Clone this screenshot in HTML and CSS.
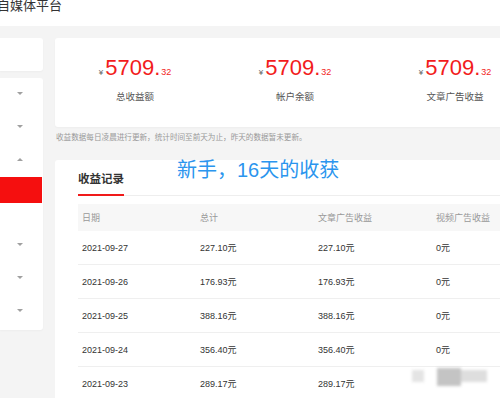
FILE: index.html
```html
<!DOCTYPE html>
<head>
  <meta charset="UTF-8">
  <meta name="viewport" content="width=device-width, initial-scale=1.0">
  <title>收益</title>
  <link rel="stylesheet" href="styles.css">
</head>
<body>
  <div class="header">
    <div class="title">自媒体平台</div>
  </div>
  <div class="layout">
    <!-- 左侧菜单 -->
    <div class="sidebar">
      <div class="side-card side-top"></div>
      <div class="side-card">
        <div class="menu-item"><span class="caret"></span></div>
        <div class="menu-item"><span class="caret"></span></div>
        <div class="menu-item"><span class="caret up"></span></div>
        <div class="sub-item active"></div>
        <div class="sub-item"></div>
        <div class="menu-item"><span class="caret"></span></div>
        <div class="menu-item"><span class="caret"></span></div>
        <div class="menu-item"><span class="caret"></span></div>
      </div>
    </div>
    <div class="main">
      <div class="stat-card">
        <div class="stat">
          <div class="num"><span class="yen">¥</span><span class="big">5709.</span><span class="small">32</span></div>
          <div class="label">总收益额</div>
        </div>
        <div class="stat">
          <div class="num"><span class="yen">¥</span><span class="big">5709.</span><span class="small">32</span></div>
          <div class="label">帐户余额</div>
        </div>
        <div class="stat">
          <div class="num"><span class="yen">¥</span><span class="big">5709.</span><span class="small">32</span></div>
          <div class="label">文章广告收益</div>
        </div>
      </div>
      <div class="note">收益数据每日凌晨进行更新，统计时间至前天为止，昨天的数据暂未更新。</div>
      <div class="table-card">
        <div class="tabs"><div class="tab">收益记录</div></div>
        <div class="table">
          <div class="row head">
            <div class="cell">日期</div><div class="cell">总计</div><div class="cell">文章广告收益</div><div class="cell">视频广告收益</div>
          </div>
          <div class="row">
            <div class="cell">2021-09-27</div><div class="cell">227.10元</div><div class="cell">227.10元</div><div class="cell">0元</div>
          </div>
          <div class="row">
            <div class="cell">2021-09-26</div><div class="cell">176.93元</div><div class="cell">176.93元</div><div class="cell">0元</div>
          </div>
          <div class="row">
            <div class="cell">2021-09-25</div><div class="cell">388.16元</div><div class="cell">388.16元</div><div class="cell">0元</div>
          </div>
          <div class="row">
            <div class="cell">2021-09-24</div><div class="cell">356.40元</div><div class="cell">356.40元</div><div class="cell">0元</div>
          </div>
          <div class="row">
            <div class="cell">2021-09-23</div><div class="cell">289.17元</div><div class="cell">289.17元</div><div class="cell"></div>
          </div>
        </div>
        <!-- 截图上的标注文字 -->
        <div class="caption">新手，16天的收获</div>
      </div>
    </div>
  </div>
  <div class="mosaic">
    <span class="m1"></span><span class="m2"></span><span class="m3"></span>
  </div>
</body>
</html>
```
FILE: styles.css
```css
body {
  margin: 0;
  width: 500px;
  height: 398px;
  overflow: hidden;
  position: relative;
  background: #f4f4f4;
  font-family: "Liberation Sans", "Noto Sans CJK SC", sans-serif;
  color: #333;
}
.header {
  height: 26px;
  background: #fff;
}
.title {
  font-size: 13px;
  line-height: 12px;
  margin-left: -3px;
  color: #333;
}
.layout {
  display: flex;
  gap: 12px;
  padding-top: 12px;
}
.sidebar {
  width: 43px;
  flex: none;
  display: flex;
  flex-direction: column;
  gap: 7px;
}
.side-card {
  background: #fff;
  border-radius: 0 3px 3px 0;
  box-shadow: 0 1px 2px rgba(0, 0, 0, 0.03);
  padding-bottom: 2px;
}
.side-top {
  height: 33px;
  padding: 0;
}
.menu-item {
  height: 33px;
  display: flex;
  align-items: center;
  padding-left: 17px;
}
.sub-item {
  height: 26px;
}
.sub-item.active {
  background: #f50f0f;
  margin-right: 1px;
}
.caret {
  width: 0;
  height: 0;
  margin-top: -2px;
  border-left: 3px solid transparent;
  border-right: 3px solid transparent;
  border-top: 3px solid #a0a0a0;
}
.caret.up {
  border-top: 0;
  border-bottom: 3px solid #a0a0a0;
}
.main {
  width: 500px;
  flex: none;
}
.stat-card {
  width: 480px;
  height: 89px;
  background: #fff;
  border-radius: 3px;
  box-shadow: 0 1px 2px rgba(0, 0, 0, 0.03);
  display: grid;
  grid-template-columns: 160px 160px 160px;
}
.stat {
  text-align: center;
  padding-top: 17px;
}
.num {
  line-height: 26px;
  color: #f21c1c;
}
.yen {
  font-size: 8px;
  color: #666;
  margin-right: 2px;
}
.big {
  font-size: 22px;
}
.small {
  font-size: 9px;
  margin-left: 1px;
}
.label {
  margin-top: 5px;
  font-size: 9.5px;
  line-height: 12px;
  color: #555;
}
.note {
  margin-top: 5px;
  font-size: 7.6px;
  line-height: 12px;
  color: #999;
  padding-left: 1px;
  white-space: nowrap;
}
.table-card {
  position: relative;
  margin-top: 16px;
  background: #fff;
  border-radius: 3px;
  padding: 12px 0 0 23px;
  height: 240px;
}
.tabs {
  display: flex;
  border-bottom: 1px solid #eeeeee;
}
.tab {
  font-size: 11.5px;
  font-weight: bold;
  line-height: 15px;
  color: #333;
  padding-bottom: 7px;
  border-bottom: 2px solid #f01a1a;
  margin-bottom: -1px;
}
.table {
  margin-top: 8px;
}
.row {
  display: grid;
  grid-template-columns: 118px 118px 118px 118px;
  height: 33px;
  align-items: center;
  border-bottom: 1px solid #efefef;
  font-size: 9px;
  color: #333;
}
.row.head {
  height: 27px;
  background: #f7f7f7;
  border-bottom: 0;
  color: #999;
}
.cell {
  padding-left: 4px;
  white-space: nowrap;
}
.caption {
  position: absolute;
  left: 122px;
  top: 0;
  font-size: 20px;
  line-height: 20px;
  color: #2b95ee;
  white-space: nowrap;
}
/* 右下角的打码水印 */
.mosaic {
  position: absolute;
  left: 410px;
  top: 366px;
  width: 80px;
  height: 24px;
  filter: blur(1.5px);
}
.mosaic span {
  position: absolute;
  background: #d4d4d4;
}
.mosaic .m1 {
  left: 2px;
  top: 4px;
  width: 12px;
  height: 12px;
  background: #e4e4e4;
}
.mosaic .m2 {
  left: 27px;
  top: 2px;
  width: 24px;
  height: 18px;
  background: #c4c4c4;
}
.mosaic .m3 {
  left: 51px;
  top: 4px;
  width: 26px;
  height: 12px;
  background: #dedede;
}
```
